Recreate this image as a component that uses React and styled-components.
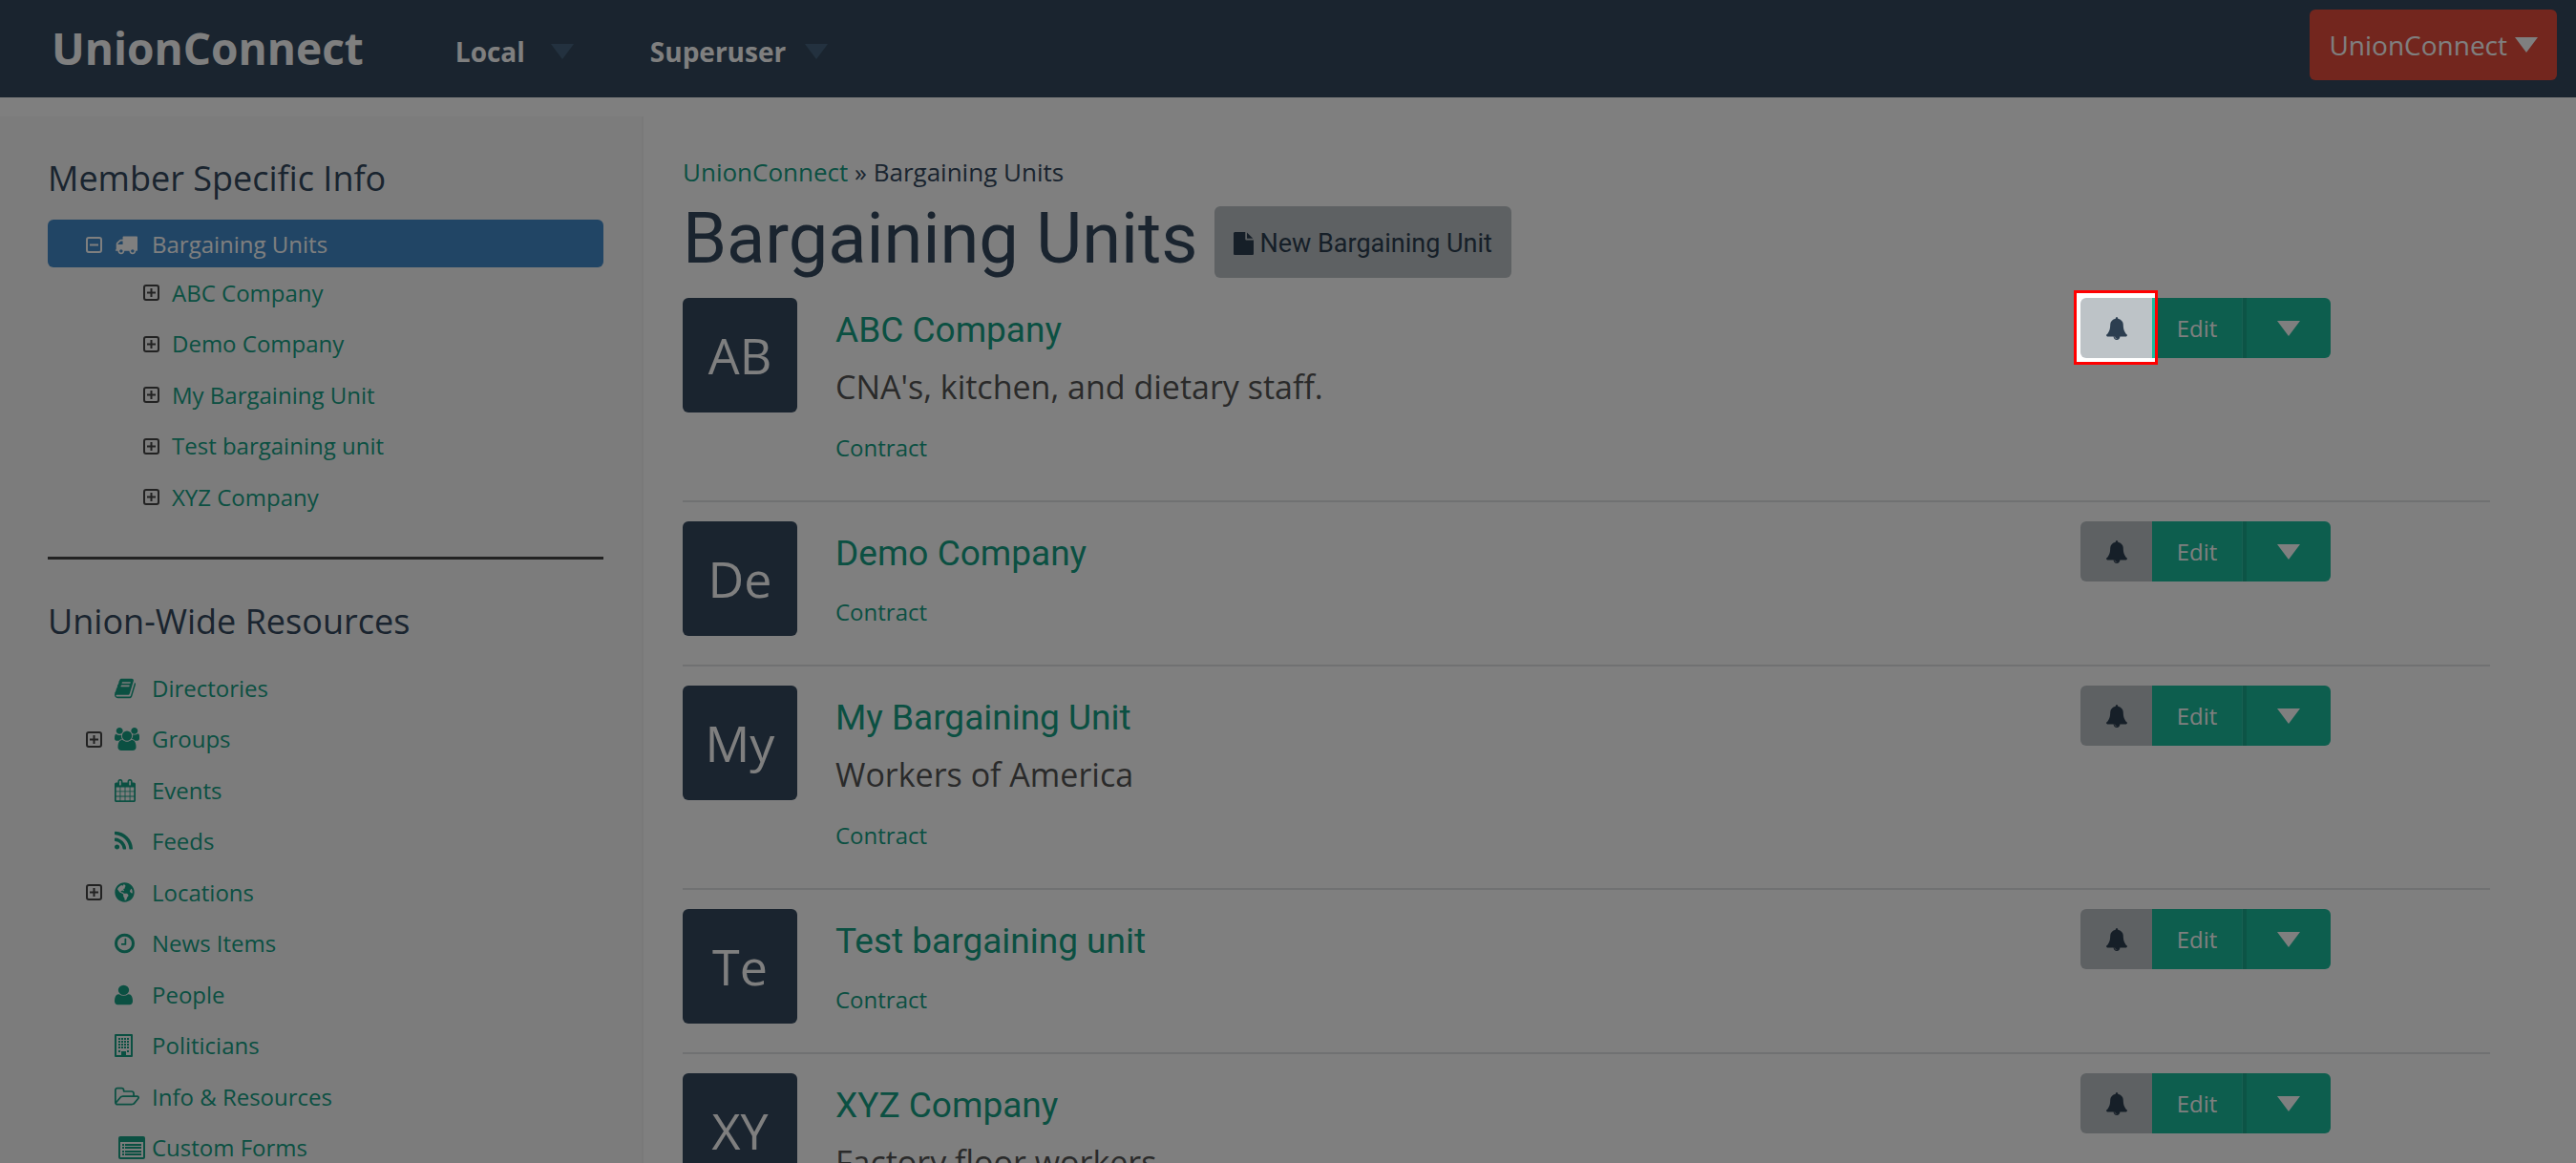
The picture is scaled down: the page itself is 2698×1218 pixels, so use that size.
import React from 'react'
import styled, { createGlobalStyle, css } from 'styled-components'
import { FaGlobeAmericas } from 'react-icons/fa'

const GlobalStyle = createGlobalStyle`
    *, *::before, *::after {
        box-sizing: border-box;
    }
    body {
        margin: 0;
        overflow: hidden;
        background: #fff;
        color: #34495e;
        font-family: "Open Sans", sans-serif;
        font-size: 24px;
    }
    h1, h2, h3, p, ul {
        margin: 0;
        padding: 0;
        font-weight: 400;
    }
    ul {
        list-style: none;
    }
    a {
        color: #16a085;
        text-decoration: none;
    }
    button {
        margin: 0;
        border: 0;
        padding: 0;
        background: none;
        color: inherit;
        font: inherit;
        cursor: pointer;
    }
    svg {
        display: block;
        flex: none;
        fill: currentColor;
    }
`

const Page = styled.div`
    display: flex;
    flex-direction: column;
    height: 100vh;
    overflow: hidden;
`

const Navbar = styled.header`
    display: flex;
    flex: none;
    align-items: flex-start;
    height: 102px;
    padding: 10px 20px 0 54px;
    background: #34495e;
    color: #fff;
`

const Brand = styled.a`
    color: #fff;
    font-size: 46px;
    font-weight: 700;
    line-height: 80px;
`

const NavMenus = styled.nav`
    display: flex;
    flex: 1;
    gap: 80px;
    margin-left: 96px;
`

const NavMenu = styled.button`
    display: flex;
    align-items: center;
    gap: 20px;
    font-size: 28px;
    font-weight: 700;
    line-height: 88px;
    svg {
        color: #46637f;
    }
`

const NavLabel = styled.span`
    min-width: 80px;
    text-align: left;
`

const AccountButton = styled.button`
    display: flex;
    align-items: center;
    gap: 8px;
    height: 74px;
    padding: 0 20px;
    border-radius: 6px;
    background: #e74c3c;
    font-size: 28px;
`

const Body = styled.div`
    display: flex;
    flex: 1;
    align-items: stretch;
`

const Sidebar = styled.aside`
    flex: 0 0 674px;
    margin-top: 20px;
    padding: 40px 40px 0 50px;
    border-right: 2px solid #f2f2f2;
    background: #f9f9f9;
`

const SideHeading = styled.h2`
    margin-bottom: 18px;
    font-size: 36px;
    line-height: 50px;
`

const Divider = styled.hr`
    height: 3px;
    margin: 36px 0 40px;
    border: 0;
    background: #444;
`

const TreeRow = styled.li`
    display: flex;
    align-items: center;
    height: 53px;
    padding-left: ${props => (props.$child ? '100px' : '40px')};
    &:nth-child(even) {
        height: 54px;
    }
    ${props => props.$active && css`
        height: 50px;
        padding-top: 2px;
        border-radius: 6px;
        background: #428bca;
        a, button {
            color: #fff;
        }
    `}
`

const ToggleSlot = styled.span`
    flex: 0 0 30px;
`

const Toggle = styled.button`
    display: block;
    color: #444;
`

const TreeLink = styled.a`
    display: flex;
    align-items: center;
    line-height: 34px;
`

const IconSlot = styled.span`
    flex: none;
    width: 39px;
`

const Main = styled.main`
    flex: 1;
    padding: 60px 90px 0 41px;
`

const Breadcrumb = styled.nav`
    margin-bottom: 18px;
    font-size: 26px;
    line-height: 36px;
`

const TitleBar = styled.div`
    display: flex;
    align-items: flex-start;
    gap: 18px;
    margin-bottom: 21px;
`

const Title = styled.h1`
    font-family: Roboto, sans-serif;
    font-size: 74px;
    line-height: 68px;
`

const NewButton = styled.button`
    display: flex;
    align-items: center;
    gap: 6px;
    height: 75px;
    padding: 3px 20px 0;
    border-radius: 6px;
    background: #bdc3c7;
    color: #2c3e50;
    font-family: Roboto, sans-serif;
    font-size: 27px;
`

const UnitRow = styled.li`
    display: flex;
    align-items: flex-start;
    padding-bottom: 30px;
    & + & {
        padding-top: 20px;
        border-top: 2px solid #e0e2e4;
    }
`

const Avatar = styled.div`
    flex: none;
    width: 120px;
    height: 120px;
    border-radius: 6px;
    background: #34495e;
    color: #fff;
    font-size: 52px;
    line-height: 120px;
    text-align: center;
`

const UnitInfo = styled.div`
    flex: 1;
    padding: 12px 0 8px 40px;
`

const UnitName = styled.h3`
    font-family: Roboto, sans-serif;
    font-size: 37px;
    line-height: 44px;
`

const UnitAbout = styled.p`
    margin-top: 12px;
    color: #555;
    font-size: 34px;
    line-height: 50px;
`

const UnitContract = styled.p`
    margin-top: 22px;
    line-height: 34px;
`

const Actions = styled.div`
    position: relative;
    display: flex;
    height: 63px;
    margin-right: 167px;
    color: #fff;
`

const BellButton = styled.button`
    display: flex;
    align-items: center;
    justify-content: center;
    width: 75px;
    border-radius: 6px 0 0 6px;
    background: #bdc3c7;
    color: #2c3e50;
`

const EditButton = styled.button`
    width: 95px;
    border-right: 1px solid #2fc0a4;
    background: #1abc9c;
`

const MoreButton = styled.button`
    display: flex;
    align-items: center;
    justify-content: center;
    width: 92px;
    border-left: 4px solid #18a98c;
    border-radius: 0 6px 6px 0;
    background: #1abc9c;
`

// tour step: everything outside the frame is dimmed by the shadow
const Spotlight = styled.div`
    position: absolute;
    z-index: 10;
    top: -8px;
    left: -7px;
    width: 88px;
    height: 78px;
    border: 3px solid #f00;
    box-shadow: 0 0 0 4000px rgba(0, 0, 0, .5);
    pointer-events: none;
`

const Caret = () => (
    <svg width="24" height="16" viewBox="0 0 24 16"><path d="M0 0h24L12 16z" /></svg>
)

const glyphs = {
    truck: ['0 0 1792 1792', 24, 'M640 1408q0-52-38-90t-90-38-90 38-38 90 38 90 90 38 90-38 38-90zm-384-512h384v-256h-158q-13 0-22 9l-195 195q-9 9-9 22v30zm1280 512q0-52-38-90t-90-38-90 38-38 90 38 90 90 38 90-38 38-90zm256-1088v1024q0 15-4 26.5t-13.5 18.5-16.5 11.5-23.5 6-22.5 2-25.5 0-22.5-.5q0 106-75 181t-181 75-181-75-75-181h-384q0 106-75 181t-181 75-181-75-75-181h-64q-3 0-22.5.5t-25.5 0-22.5-2-23.5-6-16.5-11.5-13.5-18.5-4-26.5q0-26 19-45t45-19v-320q0-8-.5-35t0-38 2.5-34.5 6.5-37 14-30.5 22.5-30l198-198q19-19 50.5-32t58.5-13h160v-192q0-26 19-45t45-19h1024q26 0 45 19t19 45z'],
    book: ['64 0 1664 1792', 22, 'M1703 478q40 57 18 129l-275 906q-19 64-76.5 107.5t-122.5 43.5h-923q-77 0-148.5-53.5t-99.5-131.5q-24-67-2-127 0-4 3-27t4-37q1-8-3-21.5t-3-19.5q2-11 8-21t16.5-23.5 16.5-23.5q23-38 45-91.5t30-91.5q3-10 .5-30t-.5-28q3-11 17-28t17-23q21-36 42-92t25-90q1-9-2.5-32t.5-28q4-13 22-30.5t22-22.5q19-26 42.5-84.5t27.5-96.5q1-8-3-25.5t-2-26.5q2-8 9-18t18-23 17-21q8-12 16.5-30.5t15-35 16-36 19.5-32 26.5-23.5 36-11.5 47.5 5.5l-1 3q38-9 51-9h761q74 0 114 56t18 130l-274 906q-36 119-71.5 153.5t-128.5 34.5h-869q-27 0-38 15-11 16-1 43 24 70 144 70h923q29 0 56-15.5t35-41.5l300-987q7-22 5-57 38 15 59 43zm-1064 2q-4 13 2 22.5t20 9.5h608q13 0 25.5-9.5t16.5-22.5l21-64q4-13-2-22.5t-20-9.5h-608q-13 0-25.5 9.5t-16.5 22.5zm-83 256q-4 13 2 22.5t20 9.5h608q13 0 25.5-9.5t16.5-22.5l21-64q4-13-2-22.5t-20-9.5h-608q-13 0-25.5 9.5t-16.5 22.5z'],
    users: ['0 0 1920 1792', 26, 'M593 896q-162 5-265 128h-134q-82 0-138-40.5t-56-118.5q0-353 124-353 6 0 43.5 21t97.5 42.5 119 21.5q67 0 133-23-5 37-5 66 0 159 93 293zm1071 637q0 120-73 189.5t-194 69.5h-874q-121 0-194-69.5t-73-189.5q0-53 3.5-103.5t14-109 26.5-108.5 43-97.5 62-81 85.5-53.5 111.5-20q10 0 43 21.5t73 48 107 48 135 21.5 135-21.5 107-48 73-48 43-21.5q61 0 111.5 20t85.5 53.5 62 81 43 97.5 26.5 108.5 14 109 3.5 103.5zm-1024-1277q0 106-75 181t-181 75-181-75-75-181 75-181 181-75 181 75 75 181zm704 384q0 159-112.5 271.5t-271.5 112.5-271.5-112.5-112.5-271.5 112.5-271.5 271.5-112.5 271.5 112.5 112.5 271.5zm576 225q0 78-56 118.5t-138 40.5h-134q-103-123-265-128 93-134 93-293 0-29-5-66 66 23 133 23 59 0 119-21.5t97.5-42.5 43.5-21q124 0 124 353zm-128-609q0 106-75 181t-181 75-181-75-75-181 75-181 181-75 181 75 75 181z'],
    calendar: ['64 0 1664 1792', 22, 'M192 1664h288v-288h-288v288zm352 0h320v-288h-320v288zm-352-352h288v-320h-288v320zm352 0h320v-320h-320v320zm-352-384h288v-288h-288v288zm736 736h320v-288h-320v288zm-384-736h320v-288h-320v288zm768 736h288v-288h-288v288zm-384-352h320v-320h-320v320zm-352-864v-288q0-13-9.5-22.5t-22.5-9.5h-64q-13 0-22.5 9.5t-9.5 22.5v288q0 13 9.5 22.5t22.5 9.5h64q13 0 22.5-9.5t9.5-22.5zm736 864h288v-320h-288v320zm-384-384h320v-288h-320v288zm384 0h288v-288h-288v288zm32-480v-288q0-13-9.5-22.5t-22.5-9.5h-64q-13 0-22.5 9.5t-9.5 22.5v288q0 13 9.5 22.5t22.5 9.5h64q13 0 22.5-9.5t9.5-22.5zm384-64v1280q0 52-38 90t-90 38h-1408q-52 0-90-38t-38-90v-1280q0-52 38-90t90-38h128v-96q0-66 47-113t113-47h64q66 0 113 47t47 113v96h384v-96q0-66 47-113t113-47h64q66 0 113 47t47 113v96h128q52 0 90 38t38 90z'],
    rss: ['192 0 1408 1792', 19, 'M576 1344q0 80-56 136t-136 56-136-56-56-136 56-136 136-56 136 56 56 136zm512 123q2 28-17 48-18 21-47 21h-135q-25 0-43-16.5t-20-41.5q-22-229-184.5-391.5t-391.5-184.5q-25-2-41.5-20t-16.5-43v-135q0-29 21-47 17-17 43-17h5q160 13 306 80.5t259 181.5q114 113 181.5 259t80.5 306zm512 2q2 27-18 47-18 20-46 20h-143q-26 0-44.5-17.5t-19.5-42.5q-12-215-101-408.5t-231.5-336-336-231.5-408.5-102q-25-1-42.5-19.5t-17.5-43.5v-143q0-28 20-46 18-18 44-18h3q262 13 501.5 120t425.5 294q187 186 294 425.5t120 501.5z'],
    clock: ['128 0 1536 1792', 21, 'M1024 544v448q0 14-9 23t-23 9h-320q-14 0-23-9t-9-23v-64q0-14 9-23t23-9h224v-352q0-14 9-23t23-9h64q14 0 23 9t9 23zm416 352q0-148-73-273t-198-198-273-73-273 73-198 198-73 273 73 273 198 198 273 73 273-73 198-198 73-273zm224 0q0 209-103 385.5t-279.5 279.5-385.5 103-385.5-103-279.5-279.5-103-385.5 103-385.5 279.5-279.5 385.5-103 385.5 103 279.5 279.5 103 385.5z'],
    user: ['256 0 1280 1792', 19, 'M1536 1399q0 109-62.5 187t-150.5 78h-854q-88 0-150.5-78t-62.5-187q0-85 8.5-160.5t31.5-152 58.5-131 94-89 134.5-34.5q131 128 313 128t313-128q76 0 134.5 34.5t94 89 58.5 131 31.5 152 8.5 160.5zm-256-887q0 159-112.5 271.5t-271.5 112.5-271.5-112.5-112.5-271.5 112.5-271.5 271.5-112.5 271.5 112.5 112.5 271.5z'],
    building: ['0 0 19 24', 19, 'M0 1q0-1 1-1h17q1 0 1 1v22q0 1-1 1H1q-1 0-1-1zM2 2v20h5v-4h5v4h5V2zM4 4h2v2H4zm3 0h2v2H7zm3 0h2v2h-2zm3 0h2v2h-2zM4 7h2v2H4zm3 0h2v2H7zm3 0h2v2h-2zm3 0h2v2h-2zM4 10h2v2H4zm3 0h2v2H7zm3 0h2v2h-2zm3 0h2v2h-2zM4 13h2v2H4zm3 0h2v2H7zm3 0h2v2h-2zm3 0h2v2h-2zM4 17h2v2H4zm9 0h2v2h-2z'],
    folder: ['64 0 1909 1792', 26, 'M1845 931q0-35-53-35h-1088q-40 0-85.5 21.5t-71.5 52.5l-294 363q-18 24-18 40 0 35 53 35h1088q40 0 86-22t71-53l294-363q18-22 18-39zm-1141-163h768v-160q0-40-28-68t-68-28h-576q-40 0-68-28t-28-68v-64q0-40-28-68t-68-28h-320q-40 0-68 28t-28 68v853l256-315q44-53 116-87.5t140-34.5zm1269 163q0 62-46 120l-295 363q-43 53-116 87.5t-140 34.5h-1088q-92 0-158-66t-66-158v-960q0-92 66-158t158-66h320q92 0 158 66t66 158v32h544q92 0 158 66t66 158v160h192q54 0 99 24.5t67 70.5q15 32 15 68z'],
    form: ['-4 0 32 24', 32, 'M2 0h24q2 0 2 2v20q0 2-2 2H2q-2 0-2-2V2q0-2 2-2zm0 6v16h24V6zM4 8h2v2H4zm3 0h17v2H7zM4 11h2v2H4zm3 0h17v2H7zM4 15h2v2H4zm3 0h17v2H7zM4 18h2v2H4zm3 0h17v2H7z'],
    bell: ['64 0 1664 1792', 22, 'M912 1696q0-16-16-16-59 0-101.5-42.5t-42.5-101.5q0-16-16-16t-16 16q0 73 51.5 124.5t124.5 51.5q16 0 16-16zm816-288q0 52-38 90t-90 38h-448q0 106-75 181t-181 75-181-75-75-181h-448q-52 0-90-38t-38-90q50-42 91-88t85-119.5 74.5-158.5 50-206 19.5-260q0-152 117-282.5t307-158.5q-8-19-8-39 0-40 28-68t68-28 68 28 28 68q0 20-8 39 190 28 307 158.5t117 282.5q0 139 19.5 260t50 206 74.5 158.5 85 119.5 91 88z'],
    file: ['128 0 1536 1792', 21, 'M1152 512v-472q22 14 36 28l408 408q14 14 28 36h-472zm-128 32q0 40 28 68t68 28h544v1056q0 40-28 68t-68 28h-1344q-40 0-68-28t-28-68v-1600q0-40 28-68t68-28h800v544z'],
}

const Icon = ({ name }) => {
    if (name === 'globe') {
        return <FaGlobeAmericas size={21} />
    }
    const [viewBox, width, d] = glyphs[name]
    return (
        <svg width={width} height="24" viewBox={viewBox} preserveAspectRatio="none">
            <path fillRule="evenodd" d={d} />
        </svg>
    )
}

const TreeToggle = ({ open, label }) => (
    <Toggle type="button" aria-expanded={!!open} aria-label={label}>
        <svg width="17" height="17" viewBox="0 0 17 17">
            <rect x="1" y="1" width="15" height="15" rx="2" fill="none" stroke="currentColor" strokeWidth="2" />
            <path d={open ? 'M4 7.5h9v2H4z' : 'M4 7.5h3.5V4h2v3.5H13v2H9.5V13h-2V9.5H4z'} />
        </svg>
    </Toggle>
)

const units = [
    { name: 'ABC Company', short: 'AB', about: "CNA's, kitchen, and dietary staff." },
    { name: 'Demo Company', short: 'De' },
    { name: 'My Bargaining Unit', short: 'My', about: 'Workers of America' },
    { name: 'Test bargaining unit', short: 'Te' },
    { name: 'XYZ Company', short: 'XY', about: 'Factory floor workers' },
]

const resources = [
    { name: 'Directories', icon: 'book' },
    { name: 'Groups', icon: 'users', toggle: true },
    { name: 'Events', icon: 'calendar' },
    { name: 'Feeds', icon: 'rss' },
    { name: 'Locations', icon: 'globe', toggle: true },
    { name: 'News Items', icon: 'clock' },
    { name: 'People', icon: 'user' },
    { name: 'Politicians', icon: 'building' },
    { name: 'Info & Resources', icon: 'folder' },
    { name: 'Custom Forms', icon: 'form' },
]

const TreeItem = ({ name, icon, toggle, open, active, child }) => (
    <TreeRow $active={active} $child={child}>
        <ToggleSlot>{toggle && <TreeToggle open={open} label={name} />}</ToggleSlot>
        <TreeLink href="#">
            {icon && <IconSlot><Icon name={icon} /></IconSlot>}
            {name}
        </TreeLink>
    </TreeRow>
)

const Unit = ({ unit, highlight }) => (
    <UnitRow>
        <Avatar>{unit.short}</Avatar>
        <UnitInfo>
            <UnitName><a href="#">{unit.name}</a></UnitName>
            {unit.about && <UnitAbout>{unit.about}</UnitAbout>}
            <UnitContract><a href="#">Contract</a></UnitContract>
        </UnitInfo>
        <Actions>
            <BellButton type="button" aria-label="Notify"><Icon name="bell" /></BellButton>
            <EditButton type="button">Edit</EditButton>
            <MoreButton type="button" aria-label="More"><Caret /></MoreButton>
            {highlight && <Spotlight />}
        </Actions>
    </UnitRow>
)

class App extends React.Component {
    state = {
        tourStep: 0,
    }
    render() {
        return (
            <Page>
                <GlobalStyle />
                <Navbar>
                    <Brand href="#">UnionConnect</Brand>
                    <NavMenus>
                        <NavMenu type="button"><NavLabel>Local</NavLabel><Caret /></NavMenu>
                        <NavMenu type="button"><NavLabel>Superuser</NavLabel><Caret /></NavMenu>
                    </NavMenus>
                    <AccountButton type="button">UnionConnect<Caret /></AccountButton>
                </Navbar>
                <Body>
                    <Sidebar>
                        <SideHeading>Member Specific Info</SideHeading>
                        <ul>
                            <TreeItem name="Bargaining Units" icon="truck" toggle open active />
                        </ul>
                        <ul>
                            {units.map(unit => <TreeItem key={unit.name} name={unit.name} toggle child />)}
                        </ul>
                        <Divider />
                        <SideHeading>Union-Wide Resources</SideHeading>
                        <ul>
                            {resources.map(item => <TreeItem key={item.name} {...item} />)}
                        </ul>
                    </Sidebar>
                    <Main>
                        <Breadcrumb><a href="#">UnionConnect</a> » Bargaining Units</Breadcrumb>
                        <TitleBar>
                            <Title>Bargaining Units</Title>
                            <NewButton type="button"><Icon name="file" />New Bargaining Unit</NewButton>
                        </TitleBar>
                        <ul>
                            {units.map((unit, i) => (
                                <Unit key={unit.name} unit={unit} highlight={i === this.state.tourStep} />
                            ))}
                        </ul>
                    </Main>
                </Body>
            </Page>
        )
    }
}

export default App
